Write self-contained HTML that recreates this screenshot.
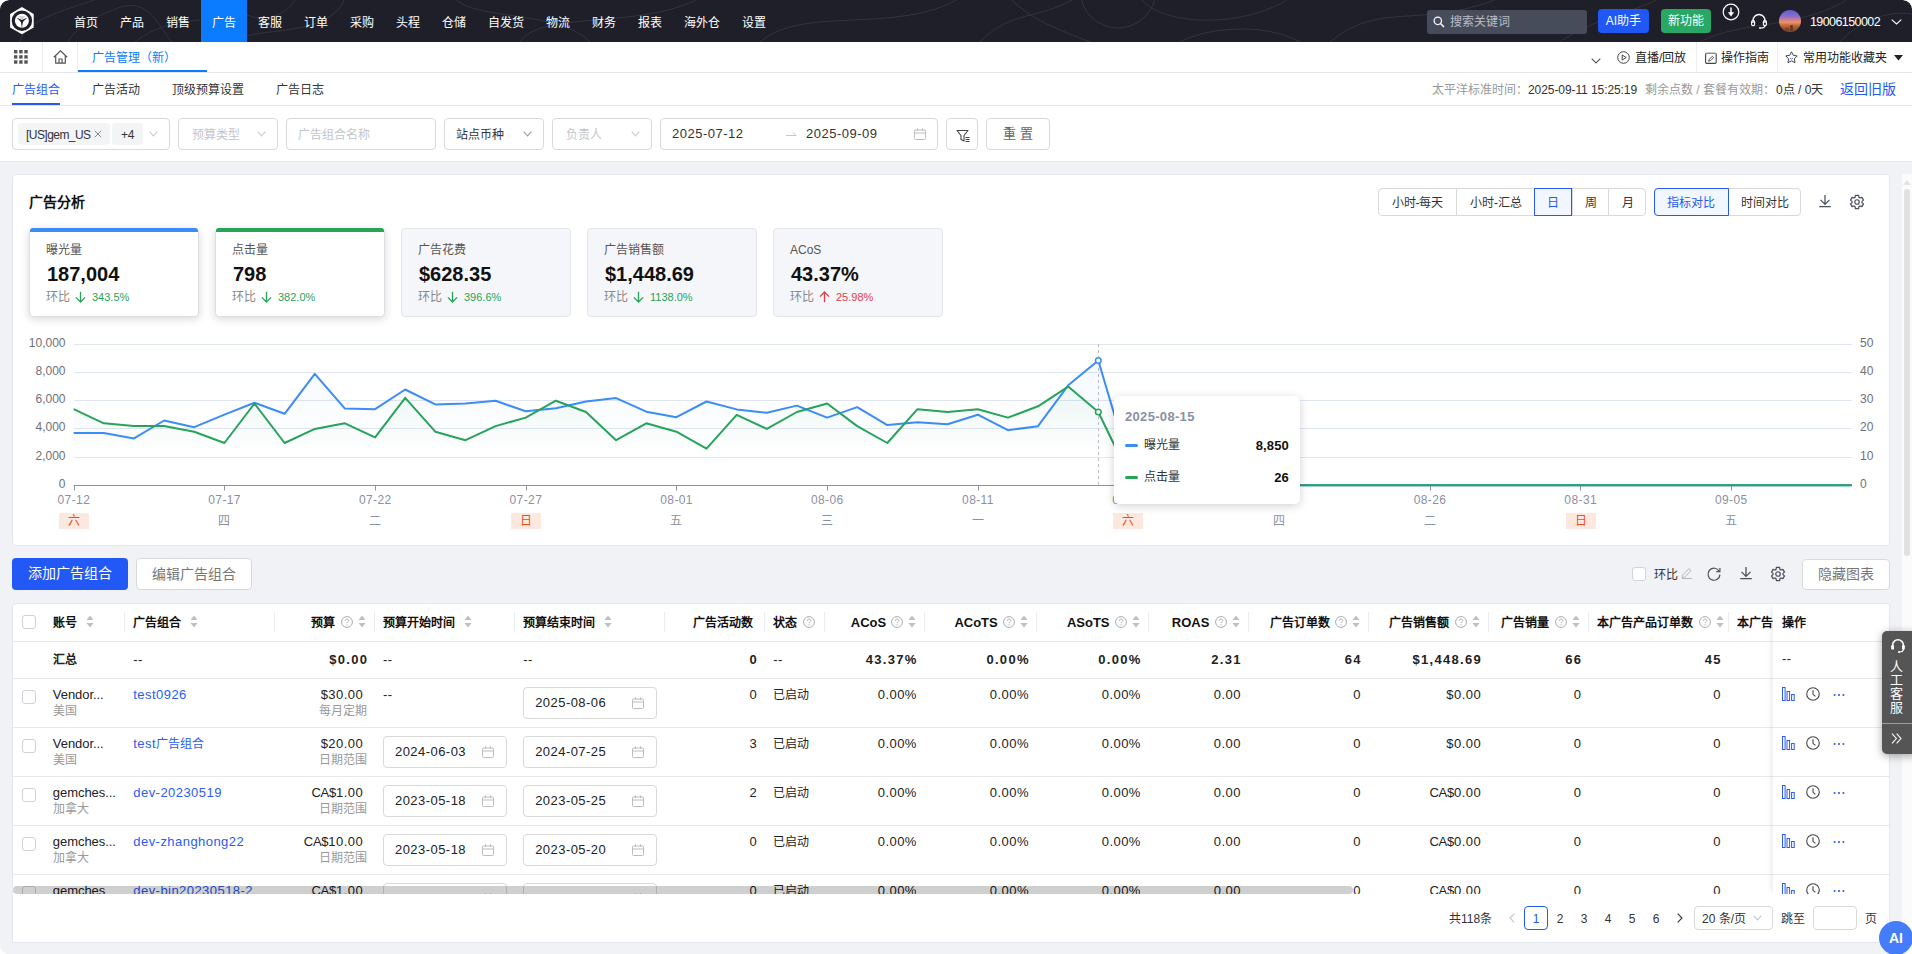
<!DOCTYPE html>
<html lang="zh-CN"><head><meta charset="utf-8"><title>广告管理</title>
<style>
*{box-sizing:border-box;margin:0;padding:0}
html,body{width:1912px;height:954px;overflow:hidden;white-space:nowrap}
body{font-family:"Liberation Sans",sans-serif;font-size:12px;color:#222;background:#fff;position:relative;line-height:1}
#pg{position:absolute;left:0;top:0;width:1912px;height:954px;background:#f0f2f5;border-radius:9px;overflow:hidden}
.abs{position:absolute}
svg{display:block;overflow:visible}
/* ---- top nav ---- */
#corner{position:absolute;left:0;top:0;width:1912px;height:20px;background:#fff}
#nav{position:absolute;left:0;top:0;width:1912px;height:42px;background:#1f1f29;border-radius:9px 9px 0 0;overflow:hidden}
#nav .it{position:absolute;top:0;height:42px;line-height:47px;text-align:center;color:#fff;font-size:12px;font-weight:500}
#nav .it.on{background:#0b7bff}
#srch{position:absolute;left:1427px;top:10px;width:160px;height:24px;border-radius:3px;background:#474c5b;color:#b9bdc9;font-size:12px;line-height:24px;padding-left:23px}
.nbtn{position:absolute;top:9px;height:24px;border-radius:4px;color:#fff;font-size:12px;font-weight:500;line-height:25px;text-align:center}
/* ---- sub bar ---- */
#sub{position:absolute;left:0;top:42px;width:1912px;height:31px;background:#fff;border-bottom:1px solid #e6e7eb}
#sub .vd{position:absolute;top:0;width:1px;height:30px;background:#ededf0}
#sub .tab{position:absolute;left:78px;top:0;width:129px;height:30px;border-bottom:2px solid #0b7bff;color:#0b7bff;font-size:12px;font-weight:500;line-height:32px;padding-left:13.5px}
#sub .r{position:absolute;top:0;height:30px;line-height:33px;font-size:12px;color:#222}
/* ---- tabs ---- */
#tabs{position:absolute;left:0;top:73px;width:1912px;height:33px;background:#fff;border-bottom:1px solid #e4e5ea}
#tabs .t{position:absolute;top:0;height:32px;line-height:35px;font-size:12px;color:#333}
#tabs .t.on{color:#2459f5}
#tabs .t.on:after{content:"";position:absolute;left:0;right:0;bottom:0px;height:2px;background:#2459f5}
#tabs .g{color:#999}
/* ---- filters ---- */
#flt{position:absolute;left:0;top:106px;width:1912px;height:56px;background:#fff;border-bottom:1px solid #e4e7eb}
.box{position:absolute;top:12px;height:32px;border:1px solid #d9d9d9;border-radius:4px;background:#fff;font-size:12px;line-height:32px;color:#333}
.ph{color:#c3c5cc}
.tag{position:absolute;top:4px;height:22px;background:#f3f4f6;border-radius:3px;line-height:24px;color:#333;font-size:12px;letter-spacing:-.45px}
/* ---- chart card ---- */
.card{position:absolute;background:#fff;border:1px solid #e4e7eb;border-radius:4px}
#cc{left:12px;top:174px;width:1878px;height:372px}
.seg{position:absolute;top:188px;height:28px;border:1px solid #d9d9d9;border-radius:4px;background:#fff}
.seg span{position:absolute;top:-1px;height:28px;line-height:31px;text-align:center;font-size:12px;color:#333;border-left:1px solid #d9d9d9}
.seg span:first-child{border-left:none}
.seg span.on{border:1px solid #2459f5;color:#2459f5;background:#f2f6ff;z-index:2;line-height:29px}
.seg span.on:first-child{border-radius:4px 0 0 4px}
.mc{position:absolute;top:228px;width:170px;height:89px;border-radius:4px;border:1px solid #e3e5ea;background:#f5f6f9}
.mc.a{background:#fff;box-shadow:0 2px 8px rgba(0,0,0,.16);border-color:#dcdee4}
.mc.a i{position:absolute;left:0;right:0;top:-1px;height:3.5px;border-radius:3px 3px 0 0}
.mc .l{position:absolute;left:16px;top:14px;font-size:12px;color:#555;line-height:14px}
.mc .v{position:absolute;left:17px;top:34px;font-size:20px;font-weight:700;color:#111;line-height:22px;letter-spacing:0}
.mc .h{position:absolute;left:16px;top:61px;font-size:12px;color:#888;line-height:14px;white-space:nowrap}
.mc .h b{font-weight:400;font-size:11px;position:absolute;left:46px;top:0}
.mc .h svg{position:absolute;left:29px;top:1px}
/* ---- tooltip ---- */
#tip{position:absolute;left:1114px;top:396px;width:186px;height:108px;background:#fff;border-radius:5px;box-shadow:0 2px 10px rgba(0,0,0,.18)}
/* ---- table toolbar ---- */
.btn{position:absolute;top:558px;height:32px;border-radius:4px;font-size:14px;line-height:31px;text-align:center}
/* ---- table ---- */
#tc{left:12px;top:603px;width:1878px;height:340px;overflow:hidden;border-radius:4px 4px 0 0}
.th{position:absolute;top:0;height:37px;line-height:39px;font-size:12px;font-weight:700;color:#111;white-space:nowrap}
.sep{position:absolute;top:8px;width:1px;height:20px;background:#ebecf0}
.row{position:absolute;left:0;width:1876px;border-top:1px solid #e9e9ec}
.c{position:absolute;white-space:nowrap;font-size:12px;line-height:16px;color:#222}
.c.r{text-align:right}
.en{font-size:13px;letter-spacing:.45px}
.c.r.en{margin-right:-.45px}
.en0{font-size:13px;letter-spacing:-.05px}
.enb{font-size:13px;letter-spacing:1.3px;font-weight:700;margin-right:-1.3px}
.g9{color:#999}
.lk{color:#2b5cf5}
.di{position:absolute;height:32px;border:1px solid #d9d9d9;border-radius:4px;background:#fff;line-height:30px;padding-left:11px}
.cb{position:absolute;width:14px;height:14px;border:1px solid #cfd2d9;border-radius:3px;background:#fff}
</style></head>
<body>
<div id="pg">
<div id="corner"></div>
<div id="nav">
<svg width="1912" height="42" viewBox="0 0 1912 42" style="position:absolute;left:0px;top:0px"><g fill="none" stroke="#34333e" stroke-width="1">
<path d="M20 42 C25 20 60 12 100 -2"/><path d="M68 42 C80 20 110 12 118 8 C150 -4 160 30 172 42"/>
<path d="M236 42 C250 25 330 40 345 -2"/><path d="M135 42 C150 30 170 22 200 20"/>
<path d="M455 -2 C470 20 560 10 590 42"/><path d="M520 42 C540 10 640 30 700 -2"/>
<path d="M760 42 C800 5 900 35 960 -2"/><path d="M980 42 C1010 10 1040 20 1075 -2"/><path d="M1010 -2 C1030 20 1060 30 1090 42"/>
<path d="M1140 -2 C1160 25 1240 30 1290 -2"/><path d="M1180 42 C1200 30 1260 20 1300 42"/>
<path d="M1330 42 C1380 0 1420 30 1500 -2"/><path d="M1560 42 C1590 20 1640 10 1660 -2"/>
<path d="M1700 42 C1740 20 1800 30 1850 -2"/><path d="M1840 42 C1860 20 1890 10 1912 14"/>
<circle cx="1118" cy="-10" r="38"/><circle cx="262" cy="-22" r="40"/>
</g></svg>
<svg width="44" height="42" viewBox="0 0 44 42" style="position:absolute;left:0px;top:0px"><polygon points="21.90,7.10 33.68,13.90 33.68,27.50 21.90,34.30 10.12,27.50 10.12,13.90" fill="#fff"/><circle cx="21.9" cy="20.7" r="10.2" fill="#1f1f29"/><circle cx="21.9" cy="20.7" r="7" fill="#fff"/><path d="M18.30 16.10 L25.50 16.10 L21.90 21.10 Z" fill="#d4d4da"/><path d="M20.65 20.30 L23.15 20.30 L21.90 27.90 Z" fill="#1f1f29"/><path d="M23.44 20.85 L22.00 22.90 L16.49 17.51 Z" fill="#1f1f29"/><path d="M21.80 22.90 L20.36 20.85 L27.31 17.51 Z" fill="#1f1f29"/></svg>
<div class="it" style="left:63px;width:46px">首页</div>
<div class="it" style="left:109px;width:46px">产品</div>
<div class="it" style="left:155px;width:46px">销售</div>
<div class="it on" style="left:201px;width:46px">广告</div>
<div class="it" style="left:247px;width:46px">客服</div>
<div class="it" style="left:293px;width:46px">订单</div>
<div class="it" style="left:339px;width:46px">采购</div>
<div class="it" style="left:385px;width:46px">头程</div>
<div class="it" style="left:431px;width:46px">仓储</div>
<div class="it" style="left:477px;width:58px">自发货</div>
<div class="it" style="left:535px;width:46px">物流</div>
<div class="it" style="left:581px;width:46px">财务</div>
<div class="it" style="left:627px;width:46px">报表</div>
<div class="it" style="left:673px;width:58px">海外仓</div>
<div class="it" style="left:731px;width:46px">设置</div>
<div id="srch">搜索关键词</div>
<svg width="12" height="12" viewBox="0 0 12 12" style="position:absolute;left:1433px;top:16px"><circle cx="4.8" cy="4.8" r="3.7" fill="none" stroke="#fff" stroke-width="1.25"/><path d="M7.5 7.5 L11 11" stroke="#fff" stroke-width="1.4"/></svg>
<div class="nbtn" style="left:1598px;width:51px;background:#2158f5">AI助手</div>
<div class="nbtn" style="left:1661px;width:50px;background:#29a764">新功能</div>
<svg width="18" height="18" viewBox="0 0 18 18" style="position:absolute;left:1722px;top:3px"><circle cx="9" cy="9" r="7.8" fill="none" stroke="#fff" stroke-width="1.2"/><path d="M9 4.4 V10" fill="none" stroke="#fff" stroke-width="1.5"/><path d="M5.9 9.2 H12.1 L9 13.4 Z" fill="#fff"/></svg>
<svg width="18" height="16" viewBox="0 0 18 16" style="position:absolute;left:1750px;top:13px"><path d="M3 10 V7.5 A6 6 0 0 1 15 7.5 V10" fill="none" stroke="#fff" stroke-width="1.4"/><rect x="1.6" y="7.6" width="3" height="5" rx="1.3" fill="none" stroke="#fff" stroke-width="1.2"/><rect x="13.4" y="7.6" width="3" height="5" rx="1.3" fill="none" stroke="#fff" stroke-width="1.2"/><path d="M15 12.5 C15 14.4 13 15 10.6 15" fill="none" stroke="#fff" stroke-width="1.2"/><circle cx="10" cy="15" r="1" fill="#fff"/></svg>
<div class="abs" style="left:1779px;top:10px;width:22px;height:22px;border-radius:50%;overflow:hidden;background:linear-gradient(180deg,#5b5fd8 0%,#8a6cc8 28%,#cf7c92 44%,#e8946a 56%,#cf7444 66%,#a9562f 80%,#8a4528 100%)"><div class="abs" style="left:11px;top:15px;width:3px;height:6px;border-radius:1px 1px 0 0;background:#6b3a22"></div><div class="abs" style="left:6px;top:18px;width:4px;height:4px;background:#7a4326"></div></div>
<div class="abs" style="left:1810px;top:0;line-height:44px;color:#fff;font-size:12.5px;letter-spacing:-.58px">19006150002</div>
<svg width="11" height="6" viewBox="0 0 11 6" style="position:absolute;left:1891px;top:19px"><path d="M.7 .7 L5.5 5 L10.3 .7" fill="none" stroke="#fff" stroke-width="1.1"/></svg>
</div>
<div id="sub">
<svg width="14" height="14" viewBox="0 0 14 14" style="position:absolute;left:14.4px;top:8.1px"><rect x="0.0" y="0.0" width="3.4" height="3.4" fill="#555"/><rect x="0.0" y="5.2" width="3.4" height="3.4" fill="#555"/><rect x="0.0" y="10.3" width="3.4" height="3.4" fill="#555"/><rect x="5.2" y="0.0" width="3.4" height="3.4" fill="#555"/><rect x="5.2" y="5.2" width="3.4" height="3.4" fill="#555"/><rect x="5.2" y="10.3" width="3.4" height="3.4" fill="#555"/><rect x="10.3" y="0.0" width="3.4" height="3.4" fill="#555"/><rect x="10.3" y="5.2" width="3.4" height="3.4" fill="#555"/><rect x="10.3" y="10.3" width="3.4" height="3.4" fill="#555"/></svg>
<div class="vd" style="left:42px"></div>
<svg width="15" height="14" viewBox="0 0 15 14" style="position:absolute;left:52.5px;top:8.3px"><path d="M.8 7.2 L7.5 .9 L14.2 7.2" fill="none" stroke="#555" stroke-width="1.2"/><path d="M2.7 6 V13.2 H12.3 V6" fill="none" stroke="#555" stroke-width="1.2"/><path d="M6 13.2 V9 H9 V13.2" fill="none" stroke="#555" stroke-width="1.2"/></svg>
<div class="vd" style="left:77px"></div>
<div class="tab">广告管理（新）</div>
<svg width="10" height="6" viewBox="0 0 10 6" style="position:absolute;left:1591px;top:16px"><path d="M.7 .7 L5.0 5 L9.3 .7" fill="none" stroke="#555" stroke-width="1.1"/></svg>
<svg width="13" height="13" viewBox="0 0 13 13" style="position:absolute;left:1616.5px;top:9px"><circle cx="6.5" cy="6.5" r="5.8" fill="none" stroke="#444" stroke-width="1"/><path d="M5.2 4 L9.2 6.5 L5.2 9 Z" fill="none" stroke="#444" stroke-width="1"/></svg>
<div class="r" style="left:1635px">直播/回放</div>
<div class="vd" style="left:1696px"></div>
<svg width="12" height="12" viewBox="0 0 12 12" style="position:absolute;left:1704.5px;top:9.5px"><rect x=".6" y="1.4" width="10.6" height="10" rx="1.2" fill="none" stroke="#444" stroke-width="1.1"/><path d="M.6 1.4 H11.2" stroke="#999"/><path d="M3.6 9.2 L4.2 7.2 L7.4 4.4 L8.6 5.6 L5.6 8.6 Z" stroke="#444" fill="none" stroke-width=".9"/></svg>
<div class="r" style="left:1721px">操作指南</div>
<div class="vd" style="left:1777px"></div>
<svg width="13" height="13" viewBox="0 0 13 13" style="position:absolute;left:1785.3px;top:8.5px"><polygon points="6.50,0.80 8.32,4.29 12.21,4.95 9.45,7.76 10.03,11.65 6.50,9.90 2.97,11.65 3.55,7.76 0.79,4.95 4.68,4.29" fill="none" stroke="#444" stroke-width="1" stroke-linejoin="round"/><path d="M4.9 7.2 Q6.5 8.7 8.1 7.2" fill="none" stroke="#5b86f7" stroke-width="1"/></svg>
<div class="r" style="left:1803px">常用功能收藏夹</div>
<svg width="9" height="6" viewBox="0 0 9 6" style="position:absolute;left:1893.5px;top:12.5px"><path d="M0 0 H9 L4.5 5.6 Z" fill="#222"/></svg>
</div>
<div id="tabs">
<div class="t on" style="left:12px">广告组合</div>
<div class="t" style="left:92px">广告活动</div>
<div class="t" style="left:172px">顶级预算设置</div>
<div class="t" style="left:276px">广告日志</div>
<div class="t g" style="left:1432px">太平洋标准时间：</div>
<div class="t" style="left:1528px;letter-spacing:-.08px">2025-09-11 15:25:19</div>
<div class="t g" style="left:1645px">剩余点数 / 套餐有效期：</div>
<div class="t" style="left:1776px">0点 / 0天</div>
<div class="t" style="left:1840px;font-size:14px;line-height:33px;color:#2459f5">返回旧版</div>
</div>
<div id="flt">
<div class="box" style="left:12px;width:158px"><div class="tag" style="left:5px;width:92px;padding-left:8px;letter-spacing:-.55px">[US]gem_US</div><svg width="8" height="8" viewBox="0 0 8 8" style="position:absolute;left:81px;top:11px"><path d="M.8 .8 L7.2 7.2 M7.2 .8 L.8 7.2" stroke="#888" stroke-width="1"/></svg><div class="tag" style="left:99px;width:31px;text-align:center">+4</div><svg width="9" height="6" viewBox="0 0 9 6" style="position:absolute;left:136px;top:12px"><path d="M.7 .7 L4.5 5 L8.3 .7" fill="none" stroke="#c8cad1" stroke-width="1.1"/></svg></div>
<div class="box ph" style="left:178px;width:100px;padding-left:13px">预算类型<svg width="9" height="6" viewBox="0 0 9 6" style="position:absolute;left:78px;top:12px"><path d="M.7 .7 L4.5 5 L8.3 .7" fill="none" stroke="#c8cad1" stroke-width="1.1"/></svg></div>
<div class="box ph" style="left:286px;width:150px;padding-left:11px">广告组合名称</div>
<div class="box" style="left:444px;width:100px;padding-left:11px">站点币种<svg width="9" height="6" viewBox="0 0 9 6" style="position:absolute;left:78px;top:12px"><path d="M.7 .7 L4.5 5 L8.3 .7" fill="none" stroke="#999" stroke-width="1.1"/></svg></div>
<div class="box ph" style="left:552px;width:100px;padding-left:13px">负责人<svg width="9" height="6" viewBox="0 0 9 6" style="position:absolute;left:78px;top:12px"><path d="M.7 .7 L4.5 5 L8.3 .7" fill="none" stroke="#c8cad1" stroke-width="1.1"/></svg></div>
<div class="box" style="left:660px;width:278px;padding-left:11px;font-size:13px;letter-spacing:.5px;line-height:30px"><span>2025-07-12</span><span class="abs" style="left:145px">2025-09-09</span><svg width="11" height="6" viewBox="0 0 11 6" style="position:absolute;left:125px;top:12px"><path d="M0 4.5 H10 M7 1.5 L10 4.5" fill="none" stroke="#c5c7ce" stroke-width="1"/></svg><svg width="12" height="12" viewBox="0 0 12 12" style="position:absolute;left:253px;top:9px"><rect x=".5" y="2" width="11" height="9.5" rx="1" fill="none" stroke="#bcbcc0"/><path d="M.5 5 H11.5 M3.5 .3 V3 M8.5 .3 V3" stroke="#bcbcc0" fill="none"/></svg></div>
<div class="box" style="left:946px;width:32px"><svg width="14" height="14" viewBox="0 0 14 14" style="position:absolute;left:9px;top:9.6px"><path d="M1 1.5 H12 L8 6.5 V12 L5 10.5 V6.5 Z" fill="none" stroke="#444" stroke-width="1.1" stroke-linejoin="round"/><path d="M9.5 8.5 H13.5 M9.5 10.5 H13.5 M9.5 12.5 H13.5" stroke="#444" stroke-width="1"/></svg></div>
<div class="box" style="left:986px;width:64px;text-align:center;font-size:13px;color:#666;word-spacing:1px;line-height:30px">重 置</div>
</div>
<div class="card" id="cc"></div>
<div class="abs" style="left:29px;top:193px;font-size:14px;font-weight:700;line-height:18px;color:#111">广告分析</div>
<div class="seg" style="left:1378px;width:268px"><span class="" style="left:-1px;width:79px">小时-每天</span><span class="" style="left:77.4px;width:78px">小时-汇总</span><span class="on" style="left:155px;width:37.7px">日</span><span class="" style="left:192.6px;width:37.7px">周</span><span class="" style="left:229.3px;width:37.7px">月</span></div>
<div class="seg" style="left:1654px;width:147px"><span class="on" style="left:-1px;width:74.5px">指标对比</span><span class="" style="left:72.5px;width:73.5px">时间对比</span></div>
<svg width="14" height="14" viewBox="0 0 14 14" style="position:absolute;left:1818px;top:194px"><path d="M7 1 V10.2 M2.5 5.9 L7 10.4 L11.5 5.9 M1.2 12.5 H12.8" fill="none" stroke="#4a4f5c" stroke-width="1.25"/></svg>
<svg width="14" height="14" viewBox="0 0 14 14" style="position:absolute;left:1850px;top:194.5px"><polygon points="5.05,2.39 5.40,0.44 8.60,0.44 8.95,2.39 10.01,3.01 11.88,2.33 13.48,5.11 11.96,6.38 11.96,7.62 13.48,8.89 11.88,11.67 10.01,10.99 8.95,11.61 8.60,13.56 5.40,13.56 5.05,11.61 3.99,10.99 2.12,11.67 0.52,8.89 2.04,7.62 2.04,6.38 0.52,5.11 2.12,2.33 3.99,3.01" fill="none" stroke="#4a4f5c" stroke-width="1.25" stroke-linejoin="round"/><circle cx="7" cy="7" r="2.25" fill="none" stroke="#4a4f5c" stroke-width="1.2"/></svg>
<div class="mc a" style="left:29px"><i style="background:#3c8cf6"></i><div class="l">曝光量</div><div class="v">187,004</div><div class="h">环比<svg width="11" height="12" viewBox="0 0 11 12"><path d="M5.5 .8 V11 M.9 6.4 L5.5 11 L10.1 6.4" fill="none" stroke="#27a35a" stroke-width="1.3"/></svg><b style="color:#27a35a">343.5%</b></div></div>
<div class="mc a" style="left:215px"><i style="background:#27a35a"></i><div class="l">点击量</div><div class="v">798</div><div class="h">环比<svg width="11" height="12" viewBox="0 0 11 12"><path d="M5.5 .8 V11 M.9 6.4 L5.5 11 L10.1 6.4" fill="none" stroke="#27a35a" stroke-width="1.3"/></svg><b style="color:#27a35a">382.0%</b></div></div>
<div class="mc" style="left:401px"><div class="l">广告花费</div><div class="v">$628.35</div><div class="h">环比<svg width="11" height="12" viewBox="0 0 11 12"><path d="M5.5 .8 V11 M.9 6.4 L5.5 11 L10.1 6.4" fill="none" stroke="#27a35a" stroke-width="1.3"/></svg><b style="color:#27a35a">396.6%</b></div></div>
<div class="mc" style="left:587px"><div class="l">广告销售额</div><div class="v">$1,448.69</div><div class="h">环比<svg width="11" height="12" viewBox="0 0 11 12"><path d="M5.5 .8 V11 M.9 6.4 L5.5 11 L10.1 6.4" fill="none" stroke="#27a35a" stroke-width="1.3"/></svg><b style="color:#27a35a">1138.0%</b></div></div>
<div class="mc" style="left:773px"><div class="l">ACoS</div><div class="v">43.37%</div><div class="h">环比<svg width="11" height="12" viewBox="0 0 11 12"><path d="M5.5 11.2 V1 M.9 5.6 L5.5 1 L10.1 5.6" fill="none" stroke="#e8394a" stroke-width="1.3"/></svg><b style="color:#e8394a">25.98%</b></div></div>
<svg width="1912" height="954" viewBox="0 0 1912 954" style="position:absolute;left:0px;top:0px" class="chart"><defs><linearGradient id="gb" x1="0" y1="0" x2="0" y2="1"><stop offset="0" stop-color="#3c8cf6" stop-opacity=".055"/><stop offset=".72" stop-color="#3c8cf6" stop-opacity="0"/></linearGradient><linearGradient id="gg" x1="0" y1="0" x2="0" y2="1"><stop offset="0" stop-color="#27a35a" stop-opacity=".055"/><stop offset=".72" stop-color="#27a35a" stop-opacity="0"/></linearGradient></defs><path d="M73.7 457.5 H1851.7" stroke="#e0e6f1" stroke-width="1"/><path d="M73.7 428.5 H1851.7" stroke="#e0e6f1" stroke-width="1"/><path d="M73.7 400.5 H1851.7" stroke="#e0e6f1" stroke-width="1"/><path d="M73.7 372.5 H1851.7" stroke="#e0e6f1" stroke-width="1"/><path d="M73.7 344.5 H1851.7" stroke="#e0e6f1" stroke-width="1"/><path d="M73.7,485.3 L73.7,432.9 L103.8,432.9 L134.0,438.4 L164.1,420.5 L194.2,427.2 L224.4,414.7 L254.5,402.7 L284.6,413.8 L314.8,373.8 L344.9,408.6 L375.1,409.2 L405.2,389.5 L435.3,404.4 L465.5,403.6 L495.6,400.8 L525.7,411.3 L555.9,408.2 L586.0,401.5 L616.1,398.1 L646.3,411.7 L676.4,417.2 L706.5,401.5 L736.7,409.4 L766.8,412.8 L796.9,405.6 L827.1,417.6 L857.2,407.1 L887.3,425.1 L917.5,422.2 L947.6,424.3 L977.8,414.7 L1007.9,430.2 L1038.0,426.2 L1068.2,385.3 L1098.3,360.5 L1128.4,462.0 L1158.6,485.3 L1188.7,485.3 L1218.8,485.3 L1249.0,485.3 L1279.1,485.3 L1309.2,485.3 L1339.4,485.3 L1369.5,485.3 L1399.6,485.3 L1429.8,485.3 L1459.9,485.3 L1490.0,485.3 L1520.2,485.3 L1550.3,485.3 L1580.5,485.3 L1610.6,485.3 L1640.7,485.3 L1670.9,485.3 L1701.0,485.3 L1731.1,485.3 L1761.3,485.3 L1791.4,485.3 L1821.5,485.3 L1851.7,485.3 L1851.7,485.3 Z" fill="url(#gb)"/><path d="M73.7,485.3 L73.7,409.2 L103.8,423.3 L134.0,426.1 L164.1,426.1 L194.2,431.7 L224.4,443.0 L254.5,403.5 L284.6,443.0 L314.8,428.9 L344.9,423.3 L375.1,437.4 L405.2,397.9 L435.3,431.7 L465.5,440.2 L495.6,426.1 L525.7,417.6 L555.9,400.7 L586.0,412.0 L616.1,440.2 L646.3,423.3 L676.4,431.7 L706.5,448.6 L736.7,414.8 L766.8,428.9 L796.9,412.0 L827.1,403.5 L857.2,426.1 L887.3,443.0 L917.5,409.2 L947.6,412.0 L977.8,409.2 L1007.9,417.6 L1038.0,406.3 L1068.2,386.6 L1098.3,412.0 L1128.4,474.0 L1158.6,485.3 L1188.7,485.3 L1218.8,485.3 L1249.0,485.3 L1279.1,485.3 L1309.2,485.3 L1339.4,485.3 L1369.5,485.3 L1399.6,485.3 L1429.8,485.3 L1459.9,485.3 L1490.0,485.3 L1520.2,485.3 L1550.3,485.3 L1580.5,485.3 L1610.6,485.3 L1640.7,485.3 L1670.9,485.3 L1701.0,485.3 L1731.1,485.3 L1761.3,485.3 L1791.4,485.3 L1821.5,485.3 L1851.7,485.3 L1851.7,485.3 Z" fill="url(#gg)"/><path d="M73.7 485.5 H1851.7" stroke="#8d93a6" stroke-width="1"/><path d="M74.5 485.5 v5" stroke="#8d93a6" stroke-width="1"/><path d="M224.5 485.5 v5" stroke="#8d93a6" stroke-width="1"/><path d="M375.5 485.5 v5" stroke="#8d93a6" stroke-width="1"/><path d="M526.5 485.5 v5" stroke="#8d93a6" stroke-width="1"/><path d="M676.5 485.5 v5" stroke="#8d93a6" stroke-width="1"/><path d="M827.5 485.5 v5" stroke="#8d93a6" stroke-width="1"/><path d="M978.5 485.5 v5" stroke="#8d93a6" stroke-width="1"/><path d="M1128.5 485.5 v5" stroke="#8d93a6" stroke-width="1"/><path d="M1279.5 485.5 v5" stroke="#8d93a6" stroke-width="1"/><path d="M1430.5 485.5 v5" stroke="#8d93a6" stroke-width="1"/><path d="M1580.5 485.5 v5" stroke="#8d93a6" stroke-width="1"/><path d="M1731.5 485.5 v5" stroke="#8d93a6" stroke-width="1"/><path d="M1098.5 344 V485" stroke="#b9bcc6" stroke-width="1" stroke-dasharray="3 3"/><polyline points="73.7,432.9 103.8,432.9 134.0,438.4 164.1,420.5 194.2,427.2 224.4,414.7 254.5,402.7 284.6,413.8 314.8,373.8 344.9,408.6 375.1,409.2 405.2,389.5 435.3,404.4 465.5,403.6 495.6,400.8 525.7,411.3 555.9,408.2 586.0,401.5 616.1,398.1 646.3,411.7 676.4,417.2 706.5,401.5 736.7,409.4 766.8,412.8 796.9,405.6 827.1,417.6 857.2,407.1 887.3,425.1 917.5,422.2 947.6,424.3 977.8,414.7 1007.9,430.2 1038.0,426.2 1068.2,385.3 1098.3,360.5 1128.4,462.0 1158.6,485.3 1188.7,485.3 1218.8,485.3 1249.0,485.3 1279.1,485.3 1309.2,485.3 1339.4,485.3 1369.5,485.3 1399.6,485.3 1429.8,485.3 1459.9,485.3 1490.0,485.3 1520.2,485.3 1550.3,485.3 1580.5,485.3 1610.6,485.3 1640.7,485.3 1670.9,485.3 1701.0,485.3 1731.1,485.3 1761.3,485.3 1791.4,485.3 1821.5,485.3 1851.7,485.3" fill="none" stroke="#3c8cf6" stroke-width="2" stroke-linejoin="round"/><polyline points="73.7,409.2 103.8,423.3 134.0,426.1 164.1,426.1 194.2,431.7 224.4,443.0 254.5,403.5 284.6,443.0 314.8,428.9 344.9,423.3 375.1,437.4 405.2,397.9 435.3,431.7 465.5,440.2 495.6,426.1 525.7,417.6 555.9,400.7 586.0,412.0 616.1,440.2 646.3,423.3 676.4,431.7 706.5,448.6 736.7,414.8 766.8,428.9 796.9,412.0 827.1,403.5 857.2,426.1 887.3,443.0 917.5,409.2 947.6,412.0 977.8,409.2 1007.9,417.6 1038.0,406.3 1068.2,386.6 1098.3,412.0 1128.4,474.0 1158.6,485.3 1188.7,485.3 1218.8,485.3 1249.0,485.3 1279.1,485.3 1309.2,485.3 1339.4,485.3 1369.5,485.3 1399.6,485.3 1429.8,485.3 1459.9,485.3 1490.0,485.3 1520.2,485.3 1550.3,485.3 1580.5,485.3 1610.6,485.3 1640.7,485.3 1670.9,485.3 1701.0,485.3 1731.1,485.3 1761.3,485.3 1791.4,485.3 1821.5,485.3 1851.7,485.3" fill="none" stroke="#27a35a" stroke-width="2" stroke-linejoin="round"/><circle cx="1098.3" cy="360.5" r="2.8" fill="#fff" stroke="#3c8cf6" stroke-width="1.5"/><circle cx="1098.3" cy="412.0" r="2.8" fill="#fff" stroke="#27a35a" stroke-width="1.5"/></svg>
<div class="abs" style="left:0;width:65.5px;top:476.8px;text-align:right;font-size:12px;line-height:14px;color:#6e7079;letter-spacing:0">0</div>
<div class="abs" style="left:0;width:65.5px;top:448.6px;text-align:right;font-size:12px;line-height:14px;color:#6e7079;letter-spacing:0">2,000</div>
<div class="abs" style="left:0;width:65.5px;top:420.4px;text-align:right;font-size:12px;line-height:14px;color:#6e7079;letter-spacing:0">4,000</div>
<div class="abs" style="left:0;width:65.5px;top:392.2px;text-align:right;font-size:12px;line-height:14px;color:#6e7079;letter-spacing:0">6,000</div>
<div class="abs" style="left:0;width:65.5px;top:364.0px;text-align:right;font-size:12px;line-height:14px;color:#6e7079;letter-spacing:0">8,000</div>
<div class="abs" style="left:0;width:65.5px;top:335.8px;text-align:right;font-size:12px;line-height:14px;color:#6e7079;letter-spacing:0">10,000</div>
<div class="abs" style="left:1860px;top:476.8px;font-size:12px;line-height:14px;color:#6e7079;letter-spacing:0">0</div>
<div class="abs" style="left:1860px;top:448.6px;font-size:12px;line-height:14px;color:#6e7079;letter-spacing:0">10</div>
<div class="abs" style="left:1860px;top:420.4px;font-size:12px;line-height:14px;color:#6e7079;letter-spacing:0">20</div>
<div class="abs" style="left:1860px;top:392.2px;font-size:12px;line-height:14px;color:#6e7079;letter-spacing:0">30</div>
<div class="abs" style="left:1860px;top:364.0px;font-size:12px;line-height:14px;color:#6e7079;letter-spacing:0">40</div>
<div class="abs" style="left:1860px;top:335.8px;font-size:12px;line-height:14px;color:#6e7079;letter-spacing:0">50</div>
<div class="abs" style="left:43.7px;width:60px;top:493px;text-align:center;font-size:12px;line-height:14px;color:#8a90a2;letter-spacing:.4px;text-indent:.4px">07-12</div>
<div class="abs" style="left:58.7px;width:30px;top:513px;height:16px;text-align:center;font-size:12px;line-height:17px;background:#fde8e0;color:#e8501a;font-weight:500">六</div>
<div class="abs" style="left:194.4px;width:60px;top:493px;text-align:center;font-size:12px;line-height:14px;color:#8a90a2;letter-spacing:.4px;text-indent:.4px">07-17</div>
<div class="abs" style="left:209.4px;width:30px;top:513px;height:16px;text-align:center;font-size:12px;line-height:17px;color:#8a90a2">四</div>
<div class="abs" style="left:345.1px;width:60px;top:493px;text-align:center;font-size:12px;line-height:14px;color:#8a90a2;letter-spacing:.4px;text-indent:.4px">07-22</div>
<div class="abs" style="left:360.1px;width:30px;top:513px;height:16px;text-align:center;font-size:12px;line-height:17px;color:#8a90a2">二</div>
<div class="abs" style="left:495.7px;width:60px;top:493px;text-align:center;font-size:12px;line-height:14px;color:#8a90a2;letter-spacing:.4px;text-indent:.4px">07-27</div>
<div class="abs" style="left:510.7px;width:30px;top:513px;height:16px;text-align:center;font-size:12px;line-height:17px;background:#fde8e0;color:#e8501a;font-weight:500">日</div>
<div class="abs" style="left:646.4px;width:60px;top:493px;text-align:center;font-size:12px;line-height:14px;color:#8a90a2;letter-spacing:.4px;text-indent:.4px">08-01</div>
<div class="abs" style="left:661.4px;width:30px;top:513px;height:16px;text-align:center;font-size:12px;line-height:17px;color:#8a90a2">五</div>
<div class="abs" style="left:797.1px;width:60px;top:493px;text-align:center;font-size:12px;line-height:14px;color:#8a90a2;letter-spacing:.4px;text-indent:.4px">08-06</div>
<div class="abs" style="left:812.1px;width:30px;top:513px;height:16px;text-align:center;font-size:12px;line-height:17px;color:#8a90a2">三</div>
<div class="abs" style="left:947.8px;width:60px;top:493px;text-align:center;font-size:12px;line-height:14px;color:#8a90a2;letter-spacing:.4px;text-indent:.4px">08-11</div>
<div class="abs" style="left:962.8px;width:30px;top:513px;height:16px;text-align:center;font-size:12px;line-height:17px;color:#8a90a2">一</div>
<div class="abs" style="left:1098.4px;width:60px;top:493px;text-align:center;font-size:12px;line-height:14px;color:#8a90a2;letter-spacing:.4px;text-indent:.4px">08-16</div>
<div class="abs" style="left:1113.4px;width:30px;top:513px;height:16px;text-align:center;font-size:12px;line-height:17px;background:#fde8e0;color:#e8501a;font-weight:500">六</div>
<div class="abs" style="left:1249.1px;width:60px;top:493px;text-align:center;font-size:12px;line-height:14px;color:#8a90a2;letter-spacing:.4px;text-indent:.4px">08-21</div>
<div class="abs" style="left:1264.1px;width:30px;top:513px;height:16px;text-align:center;font-size:12px;line-height:17px;color:#8a90a2">四</div>
<div class="abs" style="left:1399.8px;width:60px;top:493px;text-align:center;font-size:12px;line-height:14px;color:#8a90a2;letter-spacing:.4px;text-indent:.4px">08-26</div>
<div class="abs" style="left:1414.8px;width:30px;top:513px;height:16px;text-align:center;font-size:12px;line-height:17px;color:#8a90a2">二</div>
<div class="abs" style="left:1550.5px;width:60px;top:493px;text-align:center;font-size:12px;line-height:14px;color:#8a90a2;letter-spacing:.4px;text-indent:.4px">08-31</div>
<div class="abs" style="left:1565.5px;width:30px;top:513px;height:16px;text-align:center;font-size:12px;line-height:17px;background:#fde8e0;color:#e8501a;font-weight:500">日</div>
<div class="abs" style="left:1701.1px;width:60px;top:493px;text-align:center;font-size:12px;line-height:14px;color:#8a90a2;letter-spacing:.4px;text-indent:.4px">09-05</div>
<div class="abs" style="left:1716.1px;width:30px;top:513px;height:16px;text-align:center;font-size:12px;line-height:17px;color:#8a90a2">五</div>
<div id="tip"><div class="abs" style="left:11px;top:13px;font-size:13px;font-weight:700;color:#8a8fa3;line-height:16px;letter-spacing:.32px">2025-08-15</div><div class="abs" style="left:11px;top:47.5px;width:13px;height:3px;border-radius:2px;background:#3c8cf6"></div><div class="abs" style="left:30px;top:41px;font-size:12px;line-height:16px;color:#333">曝光量</div><div class="abs" style="right:11px;top:42px;font-size:13px;line-height:16px;font-weight:700;color:#111;letter-spacing:.15px">8,850</div><div class="abs" style="left:11px;top:79.5px;width:13px;height:3px;border-radius:2px;background:#27a35a"></div><div class="abs" style="left:30px;top:73px;font-size:12px;line-height:16px;color:#333">点击量</div><div class="abs" style="right:11px;top:74px;font-size:13px;line-height:16px;font-weight:700;color:#111;letter-spacing:.15px">26</div></div>
<div class="btn" style="left:12px;width:116px;background:#2258f6;color:#fff">添加广告组合</div>
<div class="btn" style="left:136px;width:116px;background:#fff;border:1px solid #d9d9d9;color:#777;line-height:30px">编辑广告组合</div>
<div class="cb" style="left:1632px;top:567px"></div>
<div class="abs" style="left:1654px;top:567px;font-size:12px;line-height:16px;color:#333">环比</div>
<svg width="12" height="12" viewBox="0 0 12 12" style="position:absolute;left:1680.5px;top:567.4px"><path d="M1.5 8.2 L8 1.7 L10 3.7 L3.5 10.2 L1.2 10.5 Z" fill="none" stroke="#b4b7c0" stroke-width="1"/><path d="M1 11.5 H11" stroke="#b4b7c0"/></svg>
<svg width="14" height="14" viewBox="0 0 14 14" style="position:absolute;left:1706.5px;top:567px"><path d="M12.2 4.2 A6 6 0 1 0 13 7.6" fill="none" stroke="#4a4f5c" stroke-width="1.2"/><path d="M12.9 1 V4.6 H9.3" fill="none" stroke="#4a4f5c" stroke-width="1.2"/></svg>
<svg width="14" height="14" viewBox="0 0 14 14" style="position:absolute;left:1738.7px;top:566px"><path d="M7 1 V10.2 M2.5 5.9 L7 10.4 L11.5 5.9 M1.2 12.5 H12.8" fill="none" stroke="#4a4f5c" stroke-width="1.25"/></svg>
<svg width="14" height="14" viewBox="0 0 14 14" style="position:absolute;left:1770.8px;top:567.3px"><polygon points="5.05,2.39 5.40,0.44 8.60,0.44 8.95,2.39 10.01,3.01 11.88,2.33 13.48,5.11 11.96,6.38 11.96,7.62 13.48,8.89 11.88,11.67 10.01,10.99 8.95,11.61 8.60,13.56 5.40,13.56 5.05,11.61 3.99,10.99 2.12,11.67 0.52,8.89 2.04,7.62 2.04,6.38 0.52,5.11 2.12,2.33 3.99,3.01" fill="none" stroke="#4a4f5c" stroke-width="1.25" stroke-linejoin="round"/><circle cx="7" cy="7" r="2.25" fill="none" stroke="#4a4f5c" stroke-width="1.2"/></svg>
<div class="btn" style="left:1802px;top:559px;height:31px;width:88px;background:#fff;border:1px solid #d9d9d9;color:#777;line-height:29px">隐藏图表</div>
<div class="card" id="tc">
<div class="abs" id="tb" style="left:0;top:0;width:1876px;height:290px;overflow:hidden">
<div class="cb" style="left:9px;top:11px"></div>
<div class="th" style="left:39.8px">账号</div>
<svg width="8" height="13" viewBox="0 0 8 13" style="position:absolute;left:73px;top:10.6px"><path d="M4 0.5 L7.5 5 H0.5 Z M4 12.5 L7.5 8 H0.5 Z" fill="#bdbfc6"/></svg>
<div class="th" style="left:120.3px">广告组合</div>
<svg width="8" height="13" viewBox="0 0 8 13" style="position:absolute;left:177px;top:10.6px"><path d="M4 0.5 L7.5 5 H0.5 Z M4 12.5 L7.5 8 H0.5 Z" fill="#bdbfc6"/></svg>
<div class="th" style="left:298.0px">预算</div>
<svg width="12" height="12" viewBox="0 0 12 12" style="position:absolute;left:327.8px;top:12px"><circle cx="6" cy="6" r="5.4" fill="none" stroke="#a9acb5" stroke-width="1"/><path d="M4.3 4.9 C4.3 3.7 5.1 3.1 6 3.1 C6.9 3.1 7.7 3.7 7.7 4.6 C7.7 5.6 6 5.8 6 7.1" fill="none" stroke="#a9acb5" stroke-width="1"/><circle cx="6" cy="8.8" r=".65" fill="#a9acb5"/></svg>
<svg width="8" height="13" viewBox="0 0 8 13" style="position:absolute;left:345px;top:10.6px"><path d="M4 0.5 L7.5 5 H0.5 Z M4 12.5 L7.5 8 H0.5 Z" fill="#bdbfc6"/></svg>
<div class="th" style="left:370.0px">预算开始时间</div>
<svg width="8" height="13" viewBox="0 0 8 13" style="position:absolute;left:451px;top:10.6px"><path d="M4 0.5 L7.5 5 H0.5 Z M4 12.5 L7.5 8 H0.5 Z" fill="#bdbfc6"/></svg>
<div class="th" style="left:510.2px">预算结束时间</div>
<svg width="8" height="13" viewBox="0 0 8 13" style="position:absolute;left:591px;top:10.6px"><path d="M4 0.5 L7.5 5 H0.5 Z M4 12.5 L7.5 8 H0.5 Z" fill="#bdbfc6"/></svg>
<div class="th" style="left:679.9px">广告活动数</div>
<div class="th" style="left:760.2px">状态</div>
<svg width="12" height="12" viewBox="0 0 12 12" style="position:absolute;left:789.9px;top:12px"><circle cx="6" cy="6" r="5.4" fill="none" stroke="#a9acb5" stroke-width="1"/><path d="M4.3 4.9 C4.3 3.7 5.1 3.1 6 3.1 C6.9 3.1 7.7 3.7 7.7 4.6 C7.7 5.6 6 5.8 6 7.1" fill="none" stroke="#a9acb5" stroke-width="1"/><circle cx="6" cy="8.8" r=".65" fill="#a9acb5"/></svg>
<div class="th" style="left:837.8px;font-size:13px;letter-spacing:0;line-height:37px">ACoS</div>
<svg width="12" height="12" viewBox="0 0 12 12" style="position:absolute;left:877.8px;top:12px"><circle cx="6" cy="6" r="5.4" fill="none" stroke="#a9acb5" stroke-width="1"/><path d="M4.3 4.9 C4.3 3.7 5.1 3.1 6 3.1 C6.9 3.1 7.7 3.7 7.7 4.6 C7.7 5.6 6 5.8 6 7.1" fill="none" stroke="#a9acb5" stroke-width="1"/><circle cx="6" cy="8.8" r=".65" fill="#a9acb5"/></svg>
<svg width="8" height="13" viewBox="0 0 8 13" style="position:absolute;left:895px;top:10.6px"><path d="M4 0.5 L7.5 5 H0.5 Z M4 12.5 L7.5 8 H0.5 Z" fill="#bdbfc6"/></svg>
<div class="th" style="left:941.4px;font-size:13px;letter-spacing:0;line-height:37px">ACoTS</div>
<svg width="12" height="12" viewBox="0 0 12 12" style="position:absolute;left:989.9px;top:12px"><circle cx="6" cy="6" r="5.4" fill="none" stroke="#a9acb5" stroke-width="1"/><path d="M4.3 4.9 C4.3 3.7 5.1 3.1 6 3.1 C6.9 3.1 7.7 3.7 7.7 4.6 C7.7 5.6 6 5.8 6 7.1" fill="none" stroke="#a9acb5" stroke-width="1"/><circle cx="6" cy="8.8" r=".65" fill="#a9acb5"/></svg>
<svg width="8" height="13" viewBox="0 0 8 13" style="position:absolute;left:1007px;top:10.6px"><path d="M4 0.5 L7.5 5 H0.5 Z M4 12.5 L7.5 8 H0.5 Z" fill="#bdbfc6"/></svg>
<div class="th" style="left:1053.9px;font-size:13px;letter-spacing:0;line-height:37px">ASoTS</div>
<svg width="12" height="12" viewBox="0 0 12 12" style="position:absolute;left:1101.9px;top:12px"><circle cx="6" cy="6" r="5.4" fill="none" stroke="#a9acb5" stroke-width="1"/><path d="M4.3 4.9 C4.3 3.7 5.1 3.1 6 3.1 C6.9 3.1 7.7 3.7 7.7 4.6 C7.7 5.6 6 5.8 6 7.1" fill="none" stroke="#a9acb5" stroke-width="1"/><circle cx="6" cy="8.8" r=".65" fill="#a9acb5"/></svg>
<svg width="8" height="13" viewBox="0 0 8 13" style="position:absolute;left:1119px;top:10.6px"><path d="M4 0.5 L7.5 5 H0.5 Z M4 12.5 L7.5 8 H0.5 Z" fill="#bdbfc6"/></svg>
<div class="th" style="left:1158.8px;font-size:13px;letter-spacing:0;line-height:37px">ROAS</div>
<svg width="12" height="12" viewBox="0 0 12 12" style="position:absolute;left:1202px;top:12px"><circle cx="6" cy="6" r="5.4" fill="none" stroke="#a9acb5" stroke-width="1"/><path d="M4.3 4.9 C4.3 3.7 5.1 3.1 6 3.1 C6.9 3.1 7.7 3.7 7.7 4.6 C7.7 5.6 6 5.8 6 7.1" fill="none" stroke="#a9acb5" stroke-width="1"/><circle cx="6" cy="8.8" r=".65" fill="#a9acb5"/></svg>
<svg width="8" height="13" viewBox="0 0 8 13" style="position:absolute;left:1218.8px;top:10.6px"><path d="M4 0.5 L7.5 5 H0.5 Z M4 12.5 L7.5 8 H0.5 Z" fill="#bdbfc6"/></svg>
<div class="th" style="left:1256.5px">广告订单数</div>
<svg width="12" height="12" viewBox="0 0 12 12" style="position:absolute;left:1322px;top:12px"><circle cx="6" cy="6" r="5.4" fill="none" stroke="#a9acb5" stroke-width="1"/><path d="M4.3 4.9 C4.3 3.7 5.1 3.1 6 3.1 C6.9 3.1 7.7 3.7 7.7 4.6 C7.7 5.6 6 5.8 6 7.1" fill="none" stroke="#a9acb5" stroke-width="1"/><circle cx="6" cy="8.8" r=".65" fill="#a9acb5"/></svg>
<svg width="8" height="13" viewBox="0 0 8 13" style="position:absolute;left:1339px;top:10.6px"><path d="M4 0.5 L7.5 5 H0.5 Z M4 12.5 L7.5 8 H0.5 Z" fill="#bdbfc6"/></svg>
<div class="th" style="left:1375.9px">广告销售额</div>
<svg width="12" height="12" viewBox="0 0 12 12" style="position:absolute;left:1442px;top:12px"><circle cx="6" cy="6" r="5.4" fill="none" stroke="#a9acb5" stroke-width="1"/><path d="M4.3 4.9 C4.3 3.7 5.1 3.1 6 3.1 C6.9 3.1 7.7 3.7 7.7 4.6 C7.7 5.6 6 5.8 6 7.1" fill="none" stroke="#a9acb5" stroke-width="1"/><circle cx="6" cy="8.8" r=".65" fill="#a9acb5"/></svg>
<svg width="8" height="13" viewBox="0 0 8 13" style="position:absolute;left:1458.8px;top:10.6px"><path d="M4 0.5 L7.5 5 H0.5 Z M4 12.5 L7.5 8 H0.5 Z" fill="#bdbfc6"/></svg>
<div class="th" style="left:1487.9px">广告销量</div>
<svg width="12" height="12" viewBox="0 0 12 12" style="position:absolute;left:1542px;top:12px"><circle cx="6" cy="6" r="5.4" fill="none" stroke="#a9acb5" stroke-width="1"/><path d="M4.3 4.9 C4.3 3.7 5.1 3.1 6 3.1 C6.9 3.1 7.7 3.7 7.7 4.6 C7.7 5.6 6 5.8 6 7.1" fill="none" stroke="#a9acb5" stroke-width="1"/><circle cx="6" cy="8.8" r=".65" fill="#a9acb5"/></svg>
<svg width="8" height="13" viewBox="0 0 8 13" style="position:absolute;left:1559px;top:10.6px"><path d="M4 0.5 L7.5 5 H0.5 Z M4 12.5 L7.5 8 H0.5 Z" fill="#bdbfc6"/></svg>
<div class="th" style="left:1583.7px">本广告产品订单数</div>
<svg width="12" height="12" viewBox="0 0 12 12" style="position:absolute;left:1686px;top:12px"><circle cx="6" cy="6" r="5.4" fill="none" stroke="#a9acb5" stroke-width="1"/><path d="M4.3 4.9 C4.3 3.7 5.1 3.1 6 3.1 C6.9 3.1 7.7 3.7 7.7 4.6 C7.7 5.6 6 5.8 6 7.1" fill="none" stroke="#a9acb5" stroke-width="1"/><circle cx="6" cy="8.8" r=".65" fill="#a9acb5"/></svg>
<svg width="8" height="13" viewBox="0 0 8 13" style="position:absolute;left:1702.7px;top:10.6px"><path d="M4 0.5 L7.5 5 H0.5 Z M4 12.5 L7.5 8 H0.5 Z" fill="#bdbfc6"/></svg>
<div class="th" style="left:1724.0px">本广告产品销售额</div>
<div class="sep" style="left:111.0px"></div>
<div class="sep" style="left:261.0px"></div>
<div class="sep" style="left:361.0px"></div>
<div class="sep" style="left:501.0px"></div>
<div class="sep" style="left:651.0px"></div>
<div class="sep" style="left:751.0px"></div>
<div class="sep" style="left:811.0px"></div>
<div class="sep" style="left:911.0px"></div>
<div class="sep" style="left:1023.0px"></div>
<div class="sep" style="left:1135.0px"></div>
<div class="sep" style="left:1235.0px"></div>
<div class="sep" style="left:1355.0px"></div>
<div class="sep" style="left:1475.0px"></div>
<div class="sep" style="left:1575.0px"></div>
<div class="sep" style="left:1715.0px"></div>
<div class="row" style="top:37px;height:37px">
<div class="c" style="left:39.8px;top:10px;font-weight:700">汇总</div>
<div class="c en" style="left:120.3px;top:10px">--</div>
<div class="c en" style="left:370.0px;top:10px">--</div>
<div class="c en" style="left:510.2px;top:10px">--</div>
<div class="c en" style="left:760.2px;top:10px">--</div>
<div class="c r enb" style="right:1522.1px;top:10px">$0.00</div>
<div class="c r enb" style="right:1132.3px;top:10px">0</div>
<div class="c r enb" style="right:972.6px;top:10px">43.37%</div>
<div class="c r enb" style="right:860.5px;top:10px">0.00%</div>
<div class="c r enb" style="right:748.6px;top:10px">0.00%</div>
<div class="c r enb" style="right:648.6px;top:10px">2.31</div>
<div class="c r enb" style="right:528.4px;top:10px">64</div>
<div class="c r enb" style="right:408.3px;top:10px">$1,448.69</div>
<div class="c r enb" style="right:308.1px;top:10px">66</div>
<div class="c r enb" style="right:168.4px;top:10px">45</div>
</div>
<div class="row" style="top:74px;height:49px">
<div class="cb" style="left:9px;top:11px"></div>
<div class="c en0" style="left:39.8px;top:8px">Vendor...</div><div class="c g9" style="left:39.8px;top:24px">美国</div>
<div class="c en lk" style="left:120.3px;top:8px">test0926</div>
<div class="c r en" style="right:1526.3px;top:8px">$30.00</div>
<div class="c r g9" style="right:1522.1px;top:24px">每月定期</div>
<div class="c en" style="left:370.0px;top:8px">--</div>
<div class="di c en" style="left:510.2px;top:8px;width:134px">2025-08-06<svg width="12" height="12" viewBox="0 0 12 12" style="position:absolute;left:108px;top:9px"><rect x=".5" y="2" width="11" height="9.5" rx="1" fill="none" stroke="#bcbcc0"/><path d="M.5 5 H11.5 M3.5 .3 V3 M8.5 .3 V3" stroke="#bcbcc0" fill="none"/></svg></div>
<div class="c r en" style="right:1132.3px;top:8px">0</div>
<div class="c" style="left:760.2px;top:8px">已启动</div>
<div class="c r en" style="right:972.6px;top:8px">0.00%</div>
<div class="c r en" style="right:860.5px;top:8px">0.00%</div>
<div class="c r en" style="right:748.6px;top:8px">0.00%</div>
<div class="c r en" style="right:648.6px;top:8px">0.00</div>
<div class="c r en" style="right:528.4px;top:8px">0</div>
<div class="c r en" style="right:408.3px;top:8px">$0.00</div>
<div class="c r en" style="right:308.1px;top:8px">0</div>
<div class="c r en" style="right:168.4px;top:8px">0</div>
</div>
<div class="row" style="top:123px;height:49px">
<div class="cb" style="left:9px;top:11px"></div>
<div class="c en0" style="left:39.8px;top:8px">Vendor...</div><div class="c g9" style="left:39.8px;top:24px">美国</div>
<div class="c en lk" style="left:120.3px;top:8px">test<span style="font-size:12px;letter-spacing:0">广告组合</span></div>
<div class="c r en" style="right:1526.3px;top:8px">$20.00</div>
<div class="c r g9" style="right:1522.1px;top:24px">日期范围</div>
<div class="di c en" style="left:370.0px;top:8px;width:124px">2024-06-03<svg width="12" height="12" viewBox="0 0 12 12" style="position:absolute;left:98px;top:9px"><rect x=".5" y="2" width="11" height="9.5" rx="1" fill="none" stroke="#bcbcc0"/><path d="M.5 5 H11.5 M3.5 .3 V3 M8.5 .3 V3" stroke="#bcbcc0" fill="none"/></svg></div>
<div class="di c en" style="left:510.2px;top:8px;width:134px">2024-07-25<svg width="12" height="12" viewBox="0 0 12 12" style="position:absolute;left:108px;top:9px"><rect x=".5" y="2" width="11" height="9.5" rx="1" fill="none" stroke="#bcbcc0"/><path d="M.5 5 H11.5 M3.5 .3 V3 M8.5 .3 V3" stroke="#bcbcc0" fill="none"/></svg></div>
<div class="c r en" style="right:1132.3px;top:8px">3</div>
<div class="c" style="left:760.2px;top:8px">已启动</div>
<div class="c r en" style="right:972.6px;top:8px">0.00%</div>
<div class="c r en" style="right:860.5px;top:8px">0.00%</div>
<div class="c r en" style="right:748.6px;top:8px">0.00%</div>
<div class="c r en" style="right:648.6px;top:8px">0.00</div>
<div class="c r en" style="right:528.4px;top:8px">0</div>
<div class="c r en" style="right:408.3px;top:8px">$0.00</div>
<div class="c r en" style="right:308.1px;top:8px">0</div>
<div class="c r en" style="right:168.4px;top:8px">0</div>
</div>
<div class="row" style="top:172px;height:49px">
<div class="cb" style="left:9px;top:11px"></div>
<div class="c en0" style="left:39.8px;top:8px">gemches...</div><div class="c g9" style="left:39.8px;top:24px">加拿大</div>
<div class="c en lk" style="left:120.3px;top:8px">dev-20230519</div>
<div class="c r en" style="right:1526.3px;top:8px"><span style="letter-spacing:-.25px">CA$</span>1.00</div>
<div class="c r g9" style="right:1522.1px;top:24px">日期范围</div>
<div class="di c en" style="left:370.0px;top:8px;width:124px">2023-05-18<svg width="12" height="12" viewBox="0 0 12 12" style="position:absolute;left:98px;top:9px"><rect x=".5" y="2" width="11" height="9.5" rx="1" fill="none" stroke="#bcbcc0"/><path d="M.5 5 H11.5 M3.5 .3 V3 M8.5 .3 V3" stroke="#bcbcc0" fill="none"/></svg></div>
<div class="di c en" style="left:510.2px;top:8px;width:134px">2023-05-25<svg width="12" height="12" viewBox="0 0 12 12" style="position:absolute;left:108px;top:9px"><rect x=".5" y="2" width="11" height="9.5" rx="1" fill="none" stroke="#bcbcc0"/><path d="M.5 5 H11.5 M3.5 .3 V3 M8.5 .3 V3" stroke="#bcbcc0" fill="none"/></svg></div>
<div class="c r en" style="right:1132.3px;top:8px">2</div>
<div class="c" style="left:760.2px;top:8px">已启动</div>
<div class="c r en" style="right:972.6px;top:8px">0.00%</div>
<div class="c r en" style="right:860.5px;top:8px">0.00%</div>
<div class="c r en" style="right:748.6px;top:8px">0.00%</div>
<div class="c r en" style="right:648.6px;top:8px">0.00</div>
<div class="c r en" style="right:528.4px;top:8px">0</div>
<div class="c r en" style="right:408.3px;top:8px"><span style="letter-spacing:-.25px">CA$</span>0.00</div>
<div class="c r en" style="right:308.1px;top:8px">0</div>
<div class="c r en" style="right:168.4px;top:8px">0</div>
</div>
<div class="row" style="top:221px;height:49px">
<div class="cb" style="left:9px;top:11px"></div>
<div class="c en0" style="left:39.8px;top:8px">gemches...</div><div class="c g9" style="left:39.8px;top:24px">加拿大</div>
<div class="c en lk" style="left:120.3px;top:8px">dev-zhanghong22</div>
<div class="c r en" style="right:1526.3px;top:8px"><span style="letter-spacing:-.25px">CA$</span>10.00</div>
<div class="c r g9" style="right:1522.1px;top:24px">日期范围</div>
<div class="di c en" style="left:370.0px;top:8px;width:124px">2023-05-18<svg width="12" height="12" viewBox="0 0 12 12" style="position:absolute;left:98px;top:9px"><rect x=".5" y="2" width="11" height="9.5" rx="1" fill="none" stroke="#bcbcc0"/><path d="M.5 5 H11.5 M3.5 .3 V3 M8.5 .3 V3" stroke="#bcbcc0" fill="none"/></svg></div>
<div class="di c en" style="left:510.2px;top:8px;width:134px">2023-05-20<svg width="12" height="12" viewBox="0 0 12 12" style="position:absolute;left:108px;top:9px"><rect x=".5" y="2" width="11" height="9.5" rx="1" fill="none" stroke="#bcbcc0"/><path d="M.5 5 H11.5 M3.5 .3 V3 M8.5 .3 V3" stroke="#bcbcc0" fill="none"/></svg></div>
<div class="c r en" style="right:1132.3px;top:8px">0</div>
<div class="c" style="left:760.2px;top:8px">已启动</div>
<div class="c r en" style="right:972.6px;top:8px">0.00%</div>
<div class="c r en" style="right:860.5px;top:8px">0.00%</div>
<div class="c r en" style="right:748.6px;top:8px">0.00%</div>
<div class="c r en" style="right:648.6px;top:8px">0.00</div>
<div class="c r en" style="right:528.4px;top:8px">0</div>
<div class="c r en" style="right:408.3px;top:8px"><span style="letter-spacing:-.25px">CA$</span>0.00</div>
<div class="c r en" style="right:308.1px;top:8px">0</div>
<div class="c r en" style="right:168.4px;top:8px">0</div>
</div>
<div class="row" style="top:270px;height:49px">
<div class="cb" style="left:9px;top:11px"></div>
<div class="c en0" style="left:39.8px;top:8px">gemches</div><div class="c g9" style="left:39.8px;top:24px">加拿大</div>
<div class="c en lk" style="left:120.3px;top:8px">dev-bin20230518-2</div>
<div class="c r en" style="right:1526.3px;top:8px"><span style="letter-spacing:-.25px">CA$</span>1.00</div>
<div class="c r g9" style="right:1522.1px;top:24px">日期范围</div>
<div class="di c en" style="left:370.0px;top:8px;width:124px">2023-05-18<svg width="12" height="12" viewBox="0 0 12 12" style="position:absolute;left:98px;top:9px"><rect x=".5" y="2" width="11" height="9.5" rx="1" fill="none" stroke="#bcbcc0"/><path d="M.5 5 H11.5 M3.5 .3 V3 M8.5 .3 V3" stroke="#bcbcc0" fill="none"/></svg></div>
<div class="di c en" style="left:510.2px;top:8px;width:134px">2023-05-20<svg width="12" height="12" viewBox="0 0 12 12" style="position:absolute;left:108px;top:9px"><rect x=".5" y="2" width="11" height="9.5" rx="1" fill="none" stroke="#bcbcc0"/><path d="M.5 5 H11.5 M3.5 .3 V3 M8.5 .3 V3" stroke="#bcbcc0" fill="none"/></svg></div>
<div class="c r en" style="right:1132.3px;top:8px">0</div>
<div class="c" style="left:760.2px;top:8px">已启动</div>
<div class="c r en" style="right:972.6px;top:8px">0.00%</div>
<div class="c r en" style="right:860.5px;top:8px">0.00%</div>
<div class="c r en" style="right:748.6px;top:8px">0.00%</div>
<div class="c r en" style="right:648.6px;top:8px">0.00</div>
<div class="c r en" style="right:528.4px;top:8px">0</div>
<div class="c r en" style="right:408.3px;top:8px"><span style="letter-spacing:-.25px">CA$</span>0.00</div>
<div class="c r en" style="right:308.1px;top:8px">0</div>
<div class="c r en" style="right:168.4px;top:8px">0</div>
</div>
<div class="abs" style="left:1760px;top:0;width:116px;height:290px;background:#fff;box-shadow:-3px 0 6px -2px rgba(0,0,0,.10)">
<div class="th" style="left:9px">操作</div>
<div class="abs" style="left:0;top:37px;width:116px;height:1px;background:#e9e9ec"></div>
<div class="c en" style="left:9px;top:47px">--</div>
<div class="abs" style="left:0;top:74px;width:116px;height:1px;background:#e9e9ec"></div>
<svg width="13" height="14" viewBox="0 0 13 14" style="position:absolute;left:9px;top:83px"><rect x=".5" y=".5" width="2.6" height="13" fill="none" stroke="#2b5cf5"/><rect x="5" y="4.5" width="2.6" height="9" fill="none" stroke="#2b5cf5"/><rect x="9.6" y="7.5" width="2.6" height="6" fill="none" stroke="#2b5cf5"/></svg>
<svg width="14" height="14" viewBox="0 0 14 14" style="position:absolute;left:32.7px;top:83px"><circle cx="7" cy="7" r="6.3" fill="none" stroke="#444" stroke-width="1.1"/><path d="M7 3.3 V7.3 L9.4 9.4" fill="none" stroke="#444" stroke-width="1.1"/></svg>
<svg width="12" height="4" viewBox="0 0 12 4" style="position:absolute;left:60px;top:88.5px"><circle cx="1.6" cy="2" r="1.05" fill="#2b5cf5"/><circle cx="6" cy="2" r="1.05" fill="#2b5cf5"/><circle cx="10.4" cy="2" r="1.05" fill="#2b5cf5"/></svg>
<div class="abs" style="left:0;top:123px;width:116px;height:1px;background:#e9e9ec"></div>
<svg width="13" height="14" viewBox="0 0 13 14" style="position:absolute;left:9px;top:132px"><rect x=".5" y=".5" width="2.6" height="13" fill="none" stroke="#2b5cf5"/><rect x="5" y="4.5" width="2.6" height="9" fill="none" stroke="#2b5cf5"/><rect x="9.6" y="7.5" width="2.6" height="6" fill="none" stroke="#2b5cf5"/></svg>
<svg width="14" height="14" viewBox="0 0 14 14" style="position:absolute;left:32.7px;top:132px"><circle cx="7" cy="7" r="6.3" fill="none" stroke="#444" stroke-width="1.1"/><path d="M7 3.3 V7.3 L9.4 9.4" fill="none" stroke="#444" stroke-width="1.1"/></svg>
<svg width="12" height="4" viewBox="0 0 12 4" style="position:absolute;left:60px;top:137.5px"><circle cx="1.6" cy="2" r="1.05" fill="#2b5cf5"/><circle cx="6" cy="2" r="1.05" fill="#2b5cf5"/><circle cx="10.4" cy="2" r="1.05" fill="#2b5cf5"/></svg>
<div class="abs" style="left:0;top:172px;width:116px;height:1px;background:#e9e9ec"></div>
<svg width="13" height="14" viewBox="0 0 13 14" style="position:absolute;left:9px;top:181px"><rect x=".5" y=".5" width="2.6" height="13" fill="none" stroke="#2b5cf5"/><rect x="5" y="4.5" width="2.6" height="9" fill="none" stroke="#2b5cf5"/><rect x="9.6" y="7.5" width="2.6" height="6" fill="none" stroke="#2b5cf5"/></svg>
<svg width="14" height="14" viewBox="0 0 14 14" style="position:absolute;left:32.7px;top:181px"><circle cx="7" cy="7" r="6.3" fill="none" stroke="#444" stroke-width="1.1"/><path d="M7 3.3 V7.3 L9.4 9.4" fill="none" stroke="#444" stroke-width="1.1"/></svg>
<svg width="12" height="4" viewBox="0 0 12 4" style="position:absolute;left:60px;top:186.5px"><circle cx="1.6" cy="2" r="1.05" fill="#2b5cf5"/><circle cx="6" cy="2" r="1.05" fill="#2b5cf5"/><circle cx="10.4" cy="2" r="1.05" fill="#2b5cf5"/></svg>
<div class="abs" style="left:0;top:221px;width:116px;height:1px;background:#e9e9ec"></div>
<svg width="13" height="14" viewBox="0 0 13 14" style="position:absolute;left:9px;top:230px"><rect x=".5" y=".5" width="2.6" height="13" fill="none" stroke="#2b5cf5"/><rect x="5" y="4.5" width="2.6" height="9" fill="none" stroke="#2b5cf5"/><rect x="9.6" y="7.5" width="2.6" height="6" fill="none" stroke="#2b5cf5"/></svg>
<svg width="14" height="14" viewBox="0 0 14 14" style="position:absolute;left:32.7px;top:230px"><circle cx="7" cy="7" r="6.3" fill="none" stroke="#444" stroke-width="1.1"/><path d="M7 3.3 V7.3 L9.4 9.4" fill="none" stroke="#444" stroke-width="1.1"/></svg>
<svg width="12" height="4" viewBox="0 0 12 4" style="position:absolute;left:60px;top:235.5px"><circle cx="1.6" cy="2" r="1.05" fill="#2b5cf5"/><circle cx="6" cy="2" r="1.05" fill="#2b5cf5"/><circle cx="10.4" cy="2" r="1.05" fill="#2b5cf5"/></svg>
<div class="abs" style="left:0;top:270px;width:116px;height:1px;background:#e9e9ec"></div>
<svg width="13" height="14" viewBox="0 0 13 14" style="position:absolute;left:9px;top:279px"><rect x=".5" y=".5" width="2.6" height="13" fill="none" stroke="#2b5cf5"/><rect x="5" y="4.5" width="2.6" height="9" fill="none" stroke="#2b5cf5"/><rect x="9.6" y="7.5" width="2.6" height="6" fill="none" stroke="#2b5cf5"/></svg>
<svg width="14" height="14" viewBox="0 0 14 14" style="position:absolute;left:32.7px;top:279px"><circle cx="7" cy="7" r="6.3" fill="none" stroke="#444" stroke-width="1.1"/><path d="M7 3.3 V7.3 L9.4 9.4" fill="none" stroke="#444" stroke-width="1.1"/></svg>
<svg width="12" height="4" viewBox="0 0 12 4" style="position:absolute;left:60px;top:284.5px"><circle cx="1.6" cy="2" r="1.05" fill="#2b5cf5"/><circle cx="6" cy="2" r="1.05" fill="#2b5cf5"/><circle cx="10.4" cy="2" r="1.05" fill="#2b5cf5"/></svg>
</div>
</div>
<div class="abs" style="left:0;top:281.6px;width:1340px;height:8px;border-radius:4px;background:rgba(0,0,0,.19)"></div>
<div class="abs" style="left:1436px;top:302px;line-height:26px;font-size:12px;color:#333">共118条</div>
<svg width="6" height="10" viewBox="0 0 6 10" style="position:absolute;left:1495.5px;top:309px"><path d="M5.3 .7 L1 5 L5.3 9.3" fill="none" stroke="#c3c5cc" stroke-width="1.1"/></svg>
<div class="abs" style="left:1511px;top:302px;width:24px;height:24px;border:1px solid #2459f5;border-radius:4px;color:#2459f5;text-align:center;line-height:24px;font-size:12px">1</div>
<div class="abs" style="left:1535px;top:302px;width:24px;text-align:center;line-height:26px;font-size:12px;color:#333">2</div>
<div class="abs" style="left:1559px;top:302px;width:24px;text-align:center;line-height:26px;font-size:12px;color:#333">3</div>
<div class="abs" style="left:1583px;top:302px;width:24px;text-align:center;line-height:26px;font-size:12px;color:#333">4</div>
<div class="abs" style="left:1607px;top:302px;width:24px;text-align:center;line-height:26px;font-size:12px;color:#333">5</div>
<div class="abs" style="left:1631px;top:302px;width:24px;text-align:center;line-height:26px;font-size:12px;color:#333">6</div>
<svg width="6" height="10" viewBox="0 0 6 10" style="position:absolute;left:1664px;top:309px"><path d="M.7 .7 L5 5 L.7 9.3" fill="none" stroke="#333" stroke-width="1.1"/></svg>
<div class="abs" style="left:1681px;top:302px;width:79px;height:24px;border:1px solid #d9d9d9;border-radius:4px;line-height:24px;padding-left:7px;font-size:12px;color:#333">20 条/页<svg width="9" height="6" viewBox="0 0 9 6" style="position:absolute;left:58px;top:8px"><path d="M.7 .7 L4.5 5 L8.3 .7" fill="none" stroke="#c0c3cb" stroke-width="1.1"/></svg></div>
<div class="abs" style="left:1768px;top:302px;line-height:26px;font-size:12px;color:#333">跳至</div>
<div class="abs" style="left:1800px;top:302px;width:44px;height:24px;border:1px solid #d9d9d9;border-radius:4px"></div>
<div class="abs" style="left:1852px;top:302px;line-height:26px;font-size:12px;color:#333">页</div>
</div>
<div class="abs" style="left:1902px;top:174px;width:10px;height:780px;background:#fbfbfb"></div>
<svg width="8" height="5" viewBox="0 0 8 5" style="position:absolute;left:1903px;top:180px"><path d="M4 0 L8 5 H0 Z" fill="#e3e3e3"/></svg>
<div class="abs" style="left:1904px;top:189px;width:6px;height:367px;border-radius:3px;background:#e1e1e1"></div>
<div class="abs" style="left:1882px;top:631px;width:34px;height:122.5px;border-radius:5px 0 0 5px;background:#555;box-shadow:0 2px 8px rgba(0,0,0,.35)"><svg width="16" height="16" viewBox="0 0 16 16" style="position:absolute;left:8px;top:6.5px"><path d="M2.6 9.5 V7.2 A5.4 5.4 0 0 1 13.4 7.2 V9.5" fill="none" stroke="#fff" stroke-width="1.5"/><rect x="1.2" y="7" width="2.8" height="4.6" rx="1.2" fill="#fff"/><rect x="12" y="7" width="2.8" height="4.6" rx="1.2" fill="#fff"/><path d="M13.4 11 C13.4 13.4 11.5 14 9.4 14" fill="none" stroke="#fff" stroke-width="1.2"/><circle cx="9" cy="14" r="1.1" fill="#fff"/></svg><div class="abs" style="left:7.4px;top:28.5px;width:14px;font-size:13px;line-height:13.9px;color:#fff;text-align:center">人<br>工<br>客<br>服</div><div class="abs" style="left:0;top:91.5px;width:34px;height:1px;background:#9c9c9c"></div><svg width="11" height="11" viewBox="0 0 11 11" style="position:absolute;left:9px;top:102px"><path d="M1 .6 L5.4 5.5 L1 10.4 M5.6 .6 L10 5.5 L5.6 10.4" fill="none" stroke="#fff" stroke-width="1.1"/></svg></div>
<div class="abs" style="left:1879px;top:921px;width:34px;height:34px;border-radius:50%;background:#457cfa;color:#fff;font-weight:700;font-size:14px;line-height:34px;text-align:center">AI</div>
</div>
</body></html>
